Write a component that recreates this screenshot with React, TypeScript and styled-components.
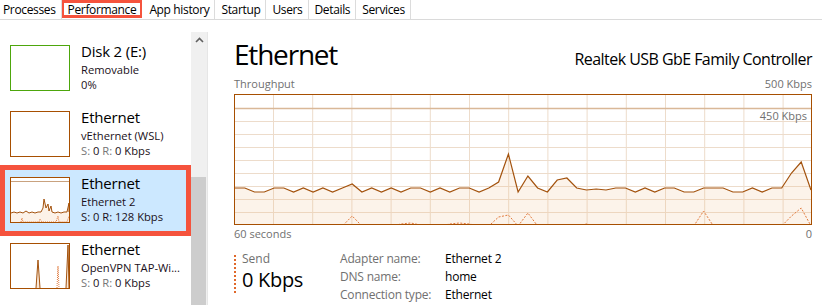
import React from "react";
import styled, { createGlobalStyle } from "styled-components";

const GlobalStyle = createGlobalStyle`
  html, body { margin: 0; padding: 0; background: #ffffff; overflow: hidden; }
  body { font-family: "Open Sans", "Noto Sans", sans-serif; color: #000; }
  * { box-sizing: border-box; }
`;

const Window = styled.div`
  width: 822px;
  height: 305px;
  display: flex;
  flex-direction: column;
  background: #fff;
  overflow: hidden;
`;

const TabBar = styled.div`
  display: flex;
  height: 20px;
  border-bottom: 1px solid #dadada;
  flex-shrink: 0;
`;

const Tab = styled.div<{ $active?: boolean; $first?: boolean }>`
  position: relative;
  height: 19px;
  line-height: 19px;
  font-size: 12px;
  letter-spacing: -0.35px;
  padding: 0 ${(p) => (p.$active ? "6px" : "5px")} 0 ${(p) => (p.$first ? "3px" : "6px")};
  border-right: 1px solid ${(p) => (p.$active ? "transparent" : "#dcdcdc")};
  color: #000;
  white-space: nowrap;
  ${(p) =>
    p.$active &&
    `
    &::after {
      content: "";
      position: absolute;
      left: 0; right: 0; top: 0; bottom: 1px;
      border: 3px solid #f5533d;
      border-left-width: 2px;
      border-right-width: 2px;
    }
  `}
`;

const Body = styled.div`
  flex: 1;
  display: flex;
  min-height: 0;
`;

const Sidebar = styled.div`
  width: 208px;
  flex-shrink: 0;
  display: flex;
  padding-top: 12px;
`;

const List = styled.div`
  width: 191px;
  padding-top: 2px;
  display: flex;
  flex-direction: column;
`;

const Scrollbar = styled.div`
  width: 17px;
  background: #f0f0f0;
  border-right: 1px solid #e6e6e6;
  display: flex;
  flex-direction: column;
  align-items: stretch;
`;

const ScrollArrow = styled.div`
  height: 16px;
  display: flex;
  align-items: center;
  justify-content: center;
`;

const ScrollTrack = styled.div`
  flex: 1;
  display: flex;
  flex-direction: column;
  justify-content: flex-end;
`;

const ScrollThumb = styled.div`
  height: 128px;
  margin-right: 1px;
  background: #cdcdcd;
`;

const Item = styled.div<{ $selected?: boolean }>`
  position: relative;
  height: 66px;
  display: flex;
  align-items: flex-start;
  padding-left: 10px;
  gap: 11px;
  background: ${(p) => (p.$selected ? "#cce8ff" : "transparent")};
  ${(p) =>
    p.$selected &&
    `
    &::after {
      content: "";
      position: absolute;
      left: 0; right: 0; top: -1px; bottom: -4px;
      border: 5px solid #f5533d;
    }
  `}
`;

const Thumb = styled.div<{ $color: string }>`
  width: 60px;
  height: 46px;
  margin-top: 11px;
  border: 1px solid ${(p) => p.$color};
  background: #fff;
  flex-shrink: 0;
  display: flex;
`;

const ItemText = styled.div`
  padding-top: 7px;
  display: flex;
  flex-direction: column;
  min-width: 0;
`;

const ItemTitle = styled.div`
  font-size: 15px;
  line-height: 21px;
  letter-spacing: -0.2px;
  color: #000;
`;

const ItemSub = styled.div`
  font-size: 11.2px;
  line-height: 15.3px;
  color: #1a1020;
  white-space: nowrap;
`;

const Dim = styled.span<{ $sel?: boolean }>`
  color: ${(p) => (p.$sel ? "#1a1020" : "#767676")};
`;

const Main = styled.div`
  flex: 1;
  min-width: 0;
  padding: 16px 10px 0 26px;
  display: flex;
  flex-direction: column;
`;

const HeaderRow = styled.div`
  display: flex;
  justify-content: space-between;
  align-items: baseline;
  height: 36px;
`;

const BigTitle = styled.div`
  font-size: 28px;
  line-height: 36px;
  letter-spacing: -1.2px;
  color: #000;
  font-weight: 400;
`;

const Subtitle = styled.div`
  font-size: 16px;
  line-height: 20px;
  letter-spacing: -0.55px;
  color: #000;
`;

const AxisRow = styled.div<{ $top: number }>`
  display: flex;
  justify-content: space-between;
  font-size: 11px;
  line-height: 14px;
  color: #707070;
  margin-top: ${(p) => p.$top}px;
`;

const ChartFrame = styled.div`
  position: relative;
  margin-top: 3px;
  height: 131px;
  border: 1px solid #a74f01;
  display: flex;
`;

const ChartLabel = styled.div`
  position: absolute;
  right: 4px;
  top: 14px;
  font-size: 11px;
  line-height: 14px;
  color: #707070;
`;

const StatsRow = styled.div`
  display: flex;
  align-items: flex-start;
  margin-top: 9px;
`;

const SendBlock = styled.div`
  width: 106px;
  margin-top: 5px;
  height: 38px;
  border-left: 2px dotted #e0682a;
  padding-left: 6px;
  display: flex;
  flex-direction: column;
`;

const SendLabel = styled.div`
  font-size: 12px;
  line-height: 14px;
  margin-top: -3px;
  color: #707070;
`;

const SendValue = styled.div`
  font-size: 20px;
  line-height: 24px;
  margin-top: 2px;
  color: #000;
  letter-spacing: -0.3px;
`;

const InfoGrid = styled.div`
  display: grid;
  grid-template-columns: 105px auto;
  grid-auto-rows: 18px;
  font-size: 12px;
  line-height: 18px;
  letter-spacing: -0.2px;
`;

const InfoLabel = styled.div`
  color: #707070;
`;

const InfoValue = styled.div`
  color: #000;
`;

/* ---------- chart data ---------- */
const W = 576;
const H = 129;
const recvY = [
  188, 188, 192, 192, 188, 188, 192, 188, 192, 188, 192, 188, 184, 192, 188, 192, 188, 192, 188, 188,
  192, 188, 192, 188, 188, 192, 188, 182, 154, 192, 176, 188, 192, 180, 178, 188, 190, 189, 190, 188,
  188, 192, 188, 192, 188, 188, 192, 192, 188, 188, 188, 192, 192, 188, 192, 188, 188, 173, 162, 190,
];
const sendY = [
  226, 226, 226, 226, 226, 226, 226, 226, 226, 226, 226, 226, 216, 226, 226, 226, 226, 224, 223, 225,
  226, 226, 224, 223, 224, 226, 226, 217, 215, 226, 213, 226, 226, 226, 226, 226, 224, 226, 226, 226,
  226, 226, 226, 226, 226, 226, 226, 226, 211, 226, 226, 226, 226, 226, 226, 226, 226, 216, 208, 226,
];
const toX = (i: number) => (i * W) / 59;
const toY = (y: number) => y - 95;

const ThroughputChart: React.FC = () => {
  const recvPts = recvY.map((y, i) => `${toX(i).toFixed(1)},${toY(y)}`).join(" ");
  const sendPts = sendY.map((y, i) => `${toX(i).toFixed(1)},${toY(y)}`).join(" ");
  const vLines = Array.from({ length: 14 }, (_, k) => 38.5 + k * 39.2);
  const hLines = Array.from({ length: 9 }, (_, k) => 13.5 + k * 13);
  return (
    <svg width={W} height={H} viewBox={`0 0 ${W} ${H}`} style={{ display: "block" }}>
      {vLines.map((x) => (
        <line key={`v${x}`} x1={x} x2={x} y1={0} y2={H} stroke="#eddccb" strokeWidth={1} />
      ))}
      {hLines.map((y, k) => (
        <line key={`h${y}`} x1={0} x2={W} y1={y} y2={y} stroke={k === 0 ? "#d9b898" : "#eddccb"} strokeWidth={k === 0 ? 1.5 : 1} />
      ))}
      <polygon points={`0,${H} ${recvPts} ${W},${H}`} fill="rgba(240,190,140,0.18)" />
      <polyline points={recvPts} fill="none" stroke="#a3520d" strokeWidth={1.2} />
      <polyline points={sendPts} fill="none" stroke="#e27a3c" strokeWidth={1} strokeDasharray="2 1.5" />
    </svg>
  );
};

const Ethernet2Thumb: React.FC = () => {
  const pts = [
    [0, 35], [3, 34], [6, 35], [9, 34], [12, 35], [15, 33], [18, 35], [21, 34], [24, 35], [27, 34],
    [30, 34], [32, 30], [33, 21], [35, 30], [37, 26], [38, 33], [40, 28], [41, 34], [44, 35], [47, 34],
    [50, 35], [53, 34], [56, 34], [58, 25], [58, 34],
  ];
  const line = pts.map((p) => p.join(",")).join(" ");
  return (
    <svg width={58} height={44} viewBox="0 0 58 44" style={{ display: "block" }}>
      <line x1={0} x2={58} y1={3.5} y2={3.5} stroke="#c9a27f" strokeWidth={1} />
      <polygon points={`0,44 ${line} 58,44`} fill="rgba(240,190,140,0.2)" />
      <polyline points={line} fill="none" stroke="#a3520d" strokeWidth={1} />
      <polyline points="10,44 11,40 12,44 28,44 29,41 31,44 45,44 47,38 48,44 56,44 58,38" fill="none" stroke="#e27a3c" strokeWidth={1} strokeDasharray="1 1" />
    </svg>
  );
};

const OpenVpnThumb: React.FC = () => (
  <svg width={58} height={44} viewBox="0 0 58 44" style={{ display: "block" }}>
    <polygon points="25,44 27,16 29,44" fill="rgba(240,190,140,0.35)" />
    <polyline points="25,44 27,16 29,44" fill="none" stroke="#a3520d" strokeWidth={1} />
    <polyline points="46,44 47,22 48,44" fill="none" stroke="#e27a3c" strokeWidth={1} strokeDasharray="1 1" />
    <polygon points="55,44 57,1 58,1 58,44" fill="rgba(240,190,140,0.35)" />
    <polyline points="55,44 57,1 58,44" fill="none" stroke="#a3520d" strokeWidth={1} />
  </svg>
);

const ChevronUp: React.FC = () => (
  <svg width={9} height={6} viewBox="0 0 9 6">
    <polyline points="1,5 4.5,1.5 8,5" fill="none" stroke="#606060" strokeWidth={1.6} />
  </svg>
);

const tabs = ["Processes", "Performance", "App history", "Startup", "Users", "Details", "Services"];

const RateLine: React.FC<{ send: string; recv: string; sel?: boolean }> = ({ send, recv, sel }) => (
  <ItemSub>
    <Dim $sel={sel}>S:</Dim>
    {` ${send} `}
    <Dim $sel={sel}>R:</Dim>
    {` ${recv}`}
  </ItemSub>
);

export default function App() {
  return (
    <>
      <GlobalStyle />
      <Window>
        <TabBar>
          {tabs.map((t, i) => (
            <Tab key={t} $first={i === 0} $active={t === "Performance"}>
              {t}
            </Tab>
          ))}
        </TabBar>
        <Body>
          <Sidebar>
            <List>
              <Item>
                <Thumb $color="#4da60c" />
                <ItemText>
                  <ItemTitle>Disk 2 (E:)</ItemTitle>
                  <ItemSub>Removable</ItemSub>
                  <ItemSub>0%</ItemSub>
                </ItemText>
              </Item>
              <Item>
                <Thumb $color="#a74f01" />
                <ItemText>
                  <ItemTitle>Ethernet</ItemTitle>
                  <ItemSub>vEthernet (WSL)</ItemSub>
                  <RateLine send="0" recv="0 Kbps" />
                </ItemText>
              </Item>
              <Item $selected>
                <Thumb $color="#a74f01">
                  <Ethernet2Thumb />
                </Thumb>
                <ItemText>
                  <ItemTitle>Ethernet</ItemTitle>
                  <ItemSub>Ethernet 2</ItemSub>
                  <RateLine send="0" recv="128 Kbps" sel />
                </ItemText>
              </Item>
              <Item>
                <Thumb $color="#a74f01">
                  <OpenVpnThumb />
                </Thumb>
                <ItemText>
                  <ItemTitle>Ethernet</ItemTitle>
                  <ItemSub>OpenVPN TAP-Wi...</ItemSub>
                  <RateLine send="0" recv="0 Kbps" />
                </ItemText>
              </Item>
            </List>
            <Scrollbar>
              <ScrollArrow>
                <ChevronUp />
              </ScrollArrow>
              <ScrollTrack>
                <ScrollThumb />
              </ScrollTrack>
            </Scrollbar>
          </Sidebar>
          <Main>
            <HeaderRow>
              <BigTitle>Ethernet</BigTitle>
              <Subtitle>Realtek USB GbE Family Controller</Subtitle>
            </HeaderRow>
            <AxisRow $top={5}>
              <span>Throughput</span>
              <span>500 Kbps</span>
            </AxisRow>
            <ChartFrame>
              <ThroughputChart />
              <ChartLabel>450 Kbps</ChartLabel>
            </ChartFrame>
            <AxisRow $top={2}>
              <span>60 seconds</span>
              <span>0</span>
            </AxisRow>
            <StatsRow>
              <SendBlock>
                <SendLabel>Send</SendLabel>
                <SendValue>0 Kbps</SendValue>
              </SendBlock>
              <InfoGrid>
                <InfoLabel>Adapter name:</InfoLabel>
                <InfoValue>Ethernet 2</InfoValue>
                <InfoLabel>DNS name:</InfoLabel>
                <InfoValue>home</InfoValue>
                <InfoLabel>Connection type:</InfoLabel>
                <InfoValue>Ethernet</InfoValue>
              </InfoGrid>
            </StatsRow>
          </Main>
        </Body>
      </Window>
    </>
  );
}
